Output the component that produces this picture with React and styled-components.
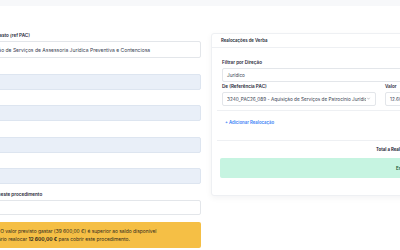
import React from 'react'
import styled, { createGlobalStyle } from 'styled-components'

const GlobalStyle = createGlobalStyle`
  html, body {
    margin: 0;
    padding: 0;
    background: #ffffff;
    font-family: Inter, "Noto Sans", sans-serif;
    color: #1f2937;
    overflow: hidden;
  }
`

const TopBar = styled.div`
  height: 6px;
  background: #f7f8fa;
`

const Main = styled.div`
  display: grid;
  grid-template-columns: 260px 260px;
  column-gap: 10px;
  align-items: start;
  margin-left: -59px;
  padding-top: 27px;
`

const FormColumn = styled.div`
  display: flex;
  flex-direction: column;
  gap: 7.5px;
`

const Field = styled.div`
  display: flex;
  flex-direction: column;
  gap: 2px;
`

const Label = styled.label`
  font-size: 4.6px;
  line-height: 6px;
  font-weight: 600;
  color: #1f2937;
  white-space: nowrap;
`

const Input = styled.div`
  box-sizing: border-box;
  height: ${p => p.$h || 16}px;
  display: flex;
  align-items: center;
  padding: 0 4px;
  border: 1px solid ${p => (p.$disabled ? '#dde5f0' : '#e3e6ea')};
  border-radius: 2px;
  background: ${p => (p.$disabled ? '#e9eff8' : '#ffffff')};
  font-size: ${p => p.$fs || 4.7}px;
  color: #374151;
  white-space: nowrap;
  overflow: hidden;
`

const Alert = styled.div`
  display: flex;
  gap: 6px;
  padding: 4.5px 8px 4.5px 24px;
  background: #f5bf45;
  border-radius: 2px;
  font-size: 4.9px;
  line-height: 8.5px;
  color: #2f2a1e;
`

const AlertIcon = styled.span`
  font-size: 6px;
`

const Card = styled.div`
  border: 1px solid #eef0f3;
  border-radius: 3px;
  background: #ffffff;
  box-shadow: 0 2px 6px rgba(15, 23, 42, 0.05);
`

const CardHeader = styled.div`
  padding: 0 9px;
  height: 13px;
  display: flex;
  align-items: center;
  border-bottom: 1px solid #eef0f3;
  font-size: 4.3px;
  font-weight: 600;
  color: #1f2937;
`

const CardBody = styled.div`
  padding: 12px 0 17px 5px;
  display: flex;
  flex-direction: column;
`

const Block = styled.div`
  padding: 0 0 4px 5px;
  display: flex;
  flex-direction: column;
  gap: 2.5px;
  border-bottom: 1px solid #eef0f3;
`

const Row = styled.div`
  display: grid;
  grid-template-columns: 154px 1fr;
  column-gap: 9px;
`

const Select = styled(Input)`
  justify-content: space-between;
  padding-right: 4px;
`

const SelectText = styled.span`
  overflow: hidden;
  flex: 1;
`

const AddLink = styled.button`
  align-self: flex-start;
  margin: 9px 0 15px 8px;
  padding: 0;
  border: none;
  background: none;
  font-family: inherit;
  font-size: 4.3px;
  font-weight: 600;
  color: #3b82f6;
`

const Totals = styled.div`
  border-top: 1px solid #eef0f3;
  padding: 6.5px 0 0 3px;
  display: flex;
  flex-direction: column;
  gap: 6px;
`

const TotalLabel = styled.div`
  padding-left: 156px;
  font-size: 4.3px;
  font-weight: 700;
  color: #1f2937;
  white-space: nowrap;
`

const StatusBox = styled.div`
  height: 20px;
  display: flex;
  align-items: center;
  padding-left: 176px;
  background: #c6f4e1;
  border-radius: 2px;
  font-size: 4.5px;
  font-weight: 600;
  color: #14532d;
  white-space: nowrap;
`

const Chevron = () => (
  <svg width="5" height="5" viewBox="0 0 10 10">
    <path d="M2.5 3.5 L5 6.5 L7.5 3.5" fill="none" stroke="#9ca3af" strokeWidth="1.2" />
  </svg>
)

export default function App() {
  return (
    <>
      <GlobalStyle />
      <TopBar />
      <Main>
        <FormColumn>
          <Field>
            <Label>Identificação da linha de gasto (ref PAC)</Label>
            <Input $h={17} $fs={5}>PAC26_088 — Aquisição de Serviços de Assessoria Jurídica Preventiva e Contenciosa</Input>
          </Field>
          <Field>
            <Label>Direção</Label>
            <Input $disabled $fs={5}>Jurídico</Input>
          </Field>
          <Field>
            <Label>Rubrica</Label>
            <Input $disabled $fs={5}>02.02.14</Input>
          </Field>
          <Field>
            <Label>Dotação</Label>
            <Input $disabled $fs={5}>45 000,00 €</Input>
          </Field>
          <Field>
            <Label>Saldo</Label>
            <Input $disabled $fs={5}>27 000,00 €</Input>
          </Field>
          <Field>
            <Label>Montante previsto gastar neste procedimento</Label>
            <Input $h={15} $fs={5}>39 600,00 €</Input>
          </Field>
          <Alert>
            <AlertIcon>⚠</AlertIcon>
            <div>
              <strong>Atenção:</strong> O valor previsto gastar (39 600,00 €) é superior ao saldo disponível
              <br />
              É necessário realocar <strong>12 600,00 €</strong> para cobrir este procedimento.
            </div>
          </Alert>
        </FormColumn>

        <Card>
          <CardHeader>Realocações de Verba</CardHeader>
          <CardBody>
            <Block>
              <Field>
                <Label>Filtrar por Direção</Label>
                <Input $h={13.5}>Jurídico</Input>
              </Field>
              <Row>
                <Field>
                  <Label>De (Referência PAC)</Label>
                  <Select $h={13.5}>
                    <SelectText>3240_PAC26_089 - Aquisição de Serviços de Patrocínio Jurídico</SelectText>
                    <Chevron />
                  </Select>
                </Field>
                <Field>
                  <Label>Valor</Label>
                  <Input $h={13.5}>12.600,00</Input>
                </Field>
              </Row>
            </Block>
            <AddLink>+ Adicionar Realocação</AddLink>
            <Totals>
              <TotalLabel>Total a Realocar: 12 600,00 €</TotalLabel>
              <StatusBox>Em conformidade</StatusBox>
            </Totals>
          </CardBody>
        </Card>
      </Main>
    </>
  )
}
